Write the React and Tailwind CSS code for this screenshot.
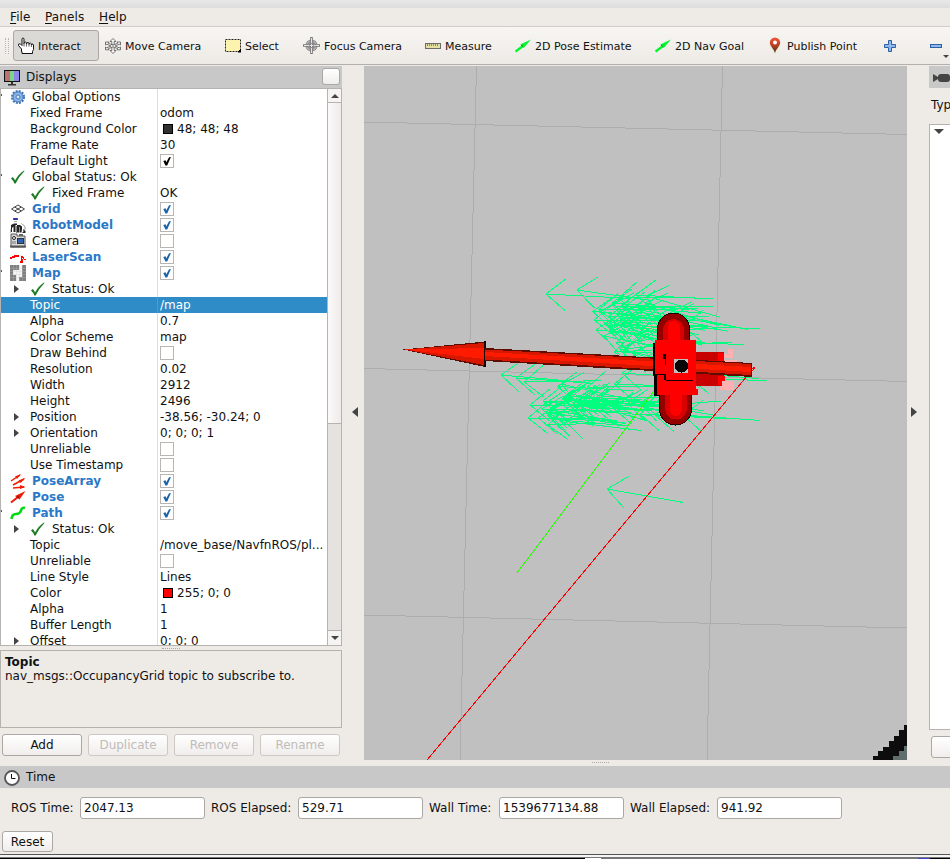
import React from 'react';

/* ---------- toolbar icons ---------- */

const HandIcon = () => (
  <svg width="18" height="18" viewBox="0 0 18 18" className="-ml-px -mr-px shrink-0">
    <path
      d="M4.5 14.5V12L1.5 8.500V7.200L3.300 6.800L5 8.5V2.2Q5 1 6 1T7 2.2V6.5L7.5 5.4Q8.6 4.6 9.4 5.6V7L10 5.8Q11.2 5.2 12 6.2V7.4L12.6 6.2Q13.8 5.8 14.4 6.8V8L15 7Q16.2 6.8 16.5 8V12.5L15.5 14.5V16.5H5V14.5Z"
      fill="#fff" stroke="#111" strokeWidth="1" />
    <path d="M7 6V9.500M9.4 6.5V9.500M12 7V9.500M14.4 8V10" stroke="#333" strokeWidth=".8" fill="none" />
  </svg>
);

const MoveIcon = () => (
  <svg width="18" height="18" viewBox="0 0 18 18" className="-ml-px -mr-px shrink-0">
    <g fill="#f7f7f7" stroke="#555" strokeWidth=".8">
      <path d="M9 1.500L12 4.500H10.200V8H7.800V4.500H6Z" />
      <path d="M9 16.500L12 13.500H10.200V9.500H7.800V13.500H6Z" />
      <path d="M1.500 5H5L4.200 6.200L9 8.200L13.800 6.200L13 5H16.500V8L15.200 7.200L11 9L15.200 10.800L16.500 10V12.800H13L13.800 11.700L9 9.800L4.200 11.700L5 12.800H1.500V10L2.800 10.800L7 9L2.800 7.200L1.500 8Z" />
    </g>
  </svg>
);

const SelectIcon = () => (
  <svg width="16" height="16" viewBox="0 0 16 16" className="shrink-0">
    <rect x=".5" y="1.5" width="15" height="12" fill="#fbf3ae" stroke="#222" strokeDasharray="2 1" />
    <path d="M16 11V14H13Z" fill="#000" stroke="#000" />
  </svg>
);

const FocusIcon = () => (
  <svg width="17" height="17" viewBox="0 0 17 17" className="shrink-0">
    <circle cx="8.5" cy="8.5" r="4.8" fill="#ececec" stroke="#777" strokeWidth="2.4" />
    <circle cx="8.5" cy="8.5" r="4.8" fill="none" stroke="#e0e0e0" strokeWidth=".9" />
    <path d="M8.5 0V17M0 8.5H17" stroke="#777" strokeWidth="2.6" />
    <path d="M8.5 1V16M1 8.5H16" stroke="#e4e4e4" strokeWidth="1" />
    <path d="M6.5 5V12M10.5 5V12M5 6.5H12M5 10.5H12" stroke="#888" strokeWidth=".8" />
  </svg>
);

const RulerIcon = () => (
  <svg width="16" height="16" viewBox="0 0 16 16" className="shrink-0">
    <rect x=".5" y="5.5" width="15" height="5" fill="#e6dfa4" stroke="#6b6b6b" />
    <path d="M2.5 6V8M4.5 6V8M6.5 6V8M8.5 6V8M10.5 6V8M12.5 6V8" stroke="#77745c" strokeWidth=".8" />
  </svg>
);

const ArrowIcon = () => (
  <svg width="16" height="16" viewBox="0 0 16 16" className="shrink-0">
    <path d="M.5 13.5L8 8" stroke="#00f52c" strokeWidth="2.400" />
    <path d="M16 1.500L5.300 6.500L8.700 10Z" fill="#00f52c" />
    <path d="M6 7L8 8.500" stroke="#0a9a20" />
  </svg>
);

const PinIcon = () => (
  <svg width="16" height="17" viewBox="0 0 16 17" className="shrink-0">
    <defs>
      <linearGradient id="pin" x1="0" y1="0" x2="0" y2="1">
        <stop offset="0" stopColor="#f0573a" />
        <stop offset=".4" stopColor="#cb4124" />
        <stop offset="1" stopColor="#3f3a12" />
      </linearGradient>
    </defs>
    <path d="M8 16.5C7.5 12.5 2.8 9.5 2.8 5.6A5.2 5.2 0 0 1 13.2 5.6C13.2 9.5 8.500 12.500 8 16.500Z" fill="url(#pin)" />
    <circle cx="8" cy="5.500" r="2" fill="#fff" />
  </svg>
);

const PlusIcon = () => (
  <svg width="14" height="14" viewBox="0 0 14 14" className="shrink-0">
    <path d="M5.500 1.500H8.500V5.500H12.500V8.500H8.500V12.500H5.500V8.500H1.500V5.500H5.500Z" fill="#8fb9ea" stroke="#2c5fa5" />
  </svg>
);

const MinusIcon = () => (
  <svg width="14" height="14" viewBox="0 0 14 14" className="shrink-0">
    <rect x="1.500" y="5.500" width="11" height="3" fill="#8fb9ea" stroke="#2c5fa5" />
  </svg>
);

const TOOLS = [
  { label: 'Interact', Icon: HandIcon, w: 'w-[87px]', active: true },
  { label: 'Move Camera', Icon: MoveIcon, w: 'w-[120px]' },
  { label: 'Select', Icon: SelectIcon, w: 'w-[78px]' },
  { label: 'Focus Camera', Icon: FocusIcon, w: 'w-[122px]' },
  { label: 'Measure', Icon: RulerIcon, w: 'w-[90px]' },
  { label: '2D Pose Estimate', Icon: ArrowIcon, w: 'w-[140px]' },
  { label: '2D Nav Goal', Icon: ArrowIcon, w: 'w-[112px]' },
  { label: 'Publish Point', Icon: PinIcon, w: 'w-[116px]' },
];

/* ---------- tree icons ---------- */

const Gear = () => (
  <svg width="16" height="16" viewBox="0 0 16 16">
    <circle cx="8" cy="8" r="6" fill="none" stroke="#3e74b8" strokeWidth="2" strokeDasharray="2 1.14" />
    <circle cx="8" cy="8" r="5" fill="#8db3e2" stroke="#4679ba" />
    <circle cx="8" cy="8" r="2" fill="#d6e5f7" stroke="#4679ba" />
  </svg>
);
const Check = () => (
  <svg width="16" height="16" viewBox="0 0 16 16">
    <path d="M1 9.500L2.800 8Q4.500 9.500 5 11.500Q8.500 5 14 1.500L14.500 2Q9.300 7 5.600 14.500H4.300Q3.500 11.500 1 9.500Z" fill="#1b7a22" />
  </svg>
);
const GridIcon = () => (
  <svg width="16" height="16" viewBox="0 0 16 16">
    <path d="M1.500 8L8 4L14.500 8L8 12ZM4.700 6L11.300 10M11.300 6L4.700 10" fill="none" stroke="#444" />
  </svg>
);
const Robot = () => (
  <svg width="16" height="16" viewBox="0 0 16 16">
    <rect x="3" y="1" width="5" height="2" rx=".8" fill="#2333b5" />
    <path d="M4 4H7V5H4Z" fill="#aaa" />
    <path d="M1 8L4 6.500H7V8H5.500V15H3.500V9.500L2 11V15H1ZM7 8H10V10H9.500V15.500H7ZM10 8L12 9.500V12L11.500 15.500H10ZM13 12L15.500 14V16H12L13.500 14.500Z" fill="#252525" />
    <path d="M11.500 6.500L15 9.500V13" stroke="#999" fill="none" />
    <path d="M0 12V16M6.500 9V16" stroke="#888" />
  </svg>
);
const CameraIcon = () => (
  <svg width="16" height="16" viewBox="0 0 16 16">
    <path d="M1 1H7V3H15V14H1Z" fill="#d9d9d9" stroke="#555" />
    <rect x="0" y="12.500" width="16" height="2" fill="#555" />
    <circle cx="4" cy="5" r="1.500" fill="#fff" stroke="#222" />
    <path d="M3 8V11M5 8V11" stroke="#777" />
    <rect x="7.500" y="5.500" width="6" height="5" fill="#2e62b0" stroke="#333" />
    <rect x="9" y="1" width="4" height="2" fill="#666" />
  </svg>
);
const Laser = () => (
  <svg width="16" height="16" viewBox="0 0 16 16" shapeRendering="crispEdges">
    <path d="M0 8H2V7H4V6H9V9H11V12H10V14H13V8H14V10H16V11H14V10H12V9H13V7H11V9H9V8H5V9H2V10H0Z" fill="#f00" />
  </svg>
);
const MapIcon = () => (
  <svg width="16" height="16" viewBox="0 0 16 16" shapeRendering="crispEdges">
    <rect width="16" height="16" fill="#f6f6f6" />
    <path d="M0 0H9V5H3V10H6V16H0ZM12 0H16V16H9V12H12Z" fill="#808080" />
    <path d="M3.500 0V16M6.500 0V16M9.500 0V16M12.500 0V16M0 3.500H16M0 6.500H16M0 9.500H16M0 12.500H16" stroke="#c4c4c4" strokeWidth=".5" opacity=".6" />
  </svg>
);
const PoseArrayIcon = () => (
  <svg width="16" height="16" viewBox="0 0 16 16">
    <path d="M1 8L10 2M3 12L14 6M3 15L14 14" stroke="#f01c05" strokeWidth="1.500" />
    <path d="M11 1L5 3.500L7 6ZM15.500 5L8.500 7.500L10.500 10ZM15.500 14L10 12V16Z" fill="#f01c05" />
  </svg>
);
const PoseIcon = () => (
  <svg width="16" height="16" viewBox="0 0 16 16">
    <path d="M1 13.500L8 8" stroke="#f01c05" strokeWidth="2" />
    <path d="M15.500 2L5 7L9.500 10.500Z" fill="#f01c05" />
    <circle cx="8" cy="8" r="1.200" fill="#a01000" />
  </svg>
);
const PathIcon = () => (
  <svg width="16" height="16" viewBox="0 0 16 16">
    <path d="M1.500 14Q2 9 6 9T11 5.500T15 3" fill="none" stroke="#00d914" strokeWidth="2.600" />
  </svg>
);

const ROWS = [
  { n: 'Global Options', Icon: Gear, edge: true },
  { n: 'Fixed Frame', v: 'odom' },
  { n: 'Background Color', v: '48; 48; 48', swatch: 'bg-[#303030]' },
  { n: 'Frame Rate', v: '30' },
  { n: 'Default Light', box: 'black' },
  { n: 'Global Status: Ok', Icon: Check, edge: true },
  { n: 'Fixed Frame', Icon: Check, sub: true, v: 'OK' },
  { n: 'Grid', Icon: GridIcon, bold: true, box: 'blue' },
  { n: 'RobotModel', Icon: Robot, bold: true, box: 'blue' },
  { n: 'Camera', Icon: CameraIcon, box: 'off' },
  { n: 'LaserScan', Icon: Laser, bold: true, box: 'blue' },
  { n: 'Map', Icon: MapIcon, bold: true, box: 'blue', edge: true },
  { n: 'Status: Ok', Icon: Check, sub: true, tri: true },
  { n: 'Topic', v: '/map', selected: true },
  { n: 'Alpha', v: '0.7' },
  { n: 'Color Scheme', v: 'map' },
  { n: 'Draw Behind', box: 'off' },
  { n: 'Resolution', v: '0.02' },
  { n: 'Width', v: '2912' },
  { n: 'Height', v: '2496' },
  { n: 'Position', v: '-38.56; -30.24; 0', tri: true },
  { n: 'Orientation', v: '0; 0; 0; 1', tri: true },
  { n: 'Unreliable', box: 'off' },
  { n: 'Use Timestamp', box: 'off' },
  { n: 'PoseArray', Icon: PoseArrayIcon, bold: true, box: 'blue' },
  { n: 'Pose', Icon: PoseIcon, bold: true, box: 'blue' },
  { n: 'Path', Icon: PathIcon, bold: true, box: 'blue', edge: true },
  { n: 'Status: Ok', Icon: Check, sub: true, tri: true },
  { n: 'Topic', v: '/move_base/NavfnROS/pl...' },
  { n: 'Unreliable', box: 'off' },
  { n: 'Line Style', v: 'Lines' },
  { n: 'Color', v: '255; 0; 0', swatch: 'bg-[#ff0000]' },
  { n: 'Alpha', v: '1' },
  { n: 'Buffer Length', v: '1' },
  { n: 'Offset', v: '0; 0; 0', tri: true },
];

function CheckBox({ kind }) {
  return (
    <span className="flex h-[14px] w-[14px] items-center justify-center border border-[#b8b5b2] bg-white">
      {kind !== 'off' && (
        <svg width="12" height="12" viewBox="0 0 12 12">
          <path d="M2.300 6L4.500 5.300L5.300 7.300L8.100 2.200L9.900 2L6.200 10.500H4.400Z" fill={kind === 'blue' ? '#1d64a8' : '#000'} />
        </svg>
      )}
    </span>
  );
}

function Row({ row }) {
  const { n, Icon, v, bold, sub, tri, edge, box, swatch, selected } = row;
  const pad = sub || !Icon ? 'w-[29px]' : 'w-[9px]';
  return (
    <div className={`flex h-4 shrink-0 ${selected ? 'bg-[#308cc6] text-white' : ''}`}>
      <div className={`flex w-[157px] shrink-0 items-center border-r ${selected ? 'border-[#4f9dd0]' : 'border-[#dcdcdc]'}`}>
        <span className={`flex h-4 shrink-0 items-center ${pad}`}>
          {edge && <span className="-mt-1 h-[2px] w-px bg-[#555]" />}
          {tri && <span className="ml-[13px] h-0 w-0 border-y-[4px] border-l-[5px] border-y-transparent border-l-[#444]" />}
        </span>
        {Icon && <span className="mr-[6px] w-4 shrink-0"><Icon /></span>}
        <span className={`whitespace-nowrap ${bold ? 'font-bold text-[#2a78c8]' : ''}`}>{n}</span>
      </div>
      <div className="flex items-center whitespace-nowrap pl-[2px]">
        {swatch && <span className={`ml-[3px] mr-1 h-[10px] w-[10px] border border-black ${swatch}`} />}
        {box ? <CheckBox kind={box} /> : v}
      </div>
    </div>
  );
}

function ScrollBar() {
  return (
    <div className="flex w-[14px] shrink-0 flex-col border-l border-[#b5b2af] bg-[#e6e2df]">
      <div className="flex h-[14px] items-center justify-center border-b border-[#b5b2af] bg-[#f6f4f2]">
        <span className="h-0 w-0 border-x-[4px] border-b-[4px] border-x-transparent border-b-[#444]" />
      </div>
      <div className="h-[321px] border-b border-[#b5b2af] bg-linear-to-r from-[#fbfafa] to-[#eeebe8]" />
      <div className="flex-1" />
      <div className="flex h-[15px] items-center justify-center border-t border-[#b5b2af] bg-[#f6f4f2]">
        <span className="-mt-px h-0 w-0 border-x-[4px] border-t-[4px] border-x-transparent border-t-[#444]" />
      </div>
    </div>
  );
}

const BTN = 'flex items-center justify-center rounded-[3px] border border-[#aaa7a4] bg-linear-to-b from-[#ffffff] to-[#f0eeec]';

function DisplaysPanel() {
  return (
    <div className="flex w-[342px] shrink-0 flex-col">
      <div className="flex h-[22px] items-center bg-[#c8c8c8] pl-1">
        <svg width="16" height="16" viewBox="0 0 16 16" className="mt-px">
          <rect x=".5" y=".5" width="15" height="11" fill="#222" stroke="#111" />
          <rect x="1" y="1" width="5" height="10" fill="#bb7272" />
          <rect x="6" y="1" width="4" height="10" fill="#7ed487" />
          <rect x="10" y="1" width="5" height="10" fill="#8a87e8" />
          <path d="M7 12H9V14H12V15.500H4V14H7Z" fill="#333" />
        </svg>
        <span className="ml-[6px] flex-1">Displays</span>
        <span className={`mr-[2px] h-[17px] w-[18px] -mt-px ${BTN} border-[#8f8c8a]`} />
      </div>
      <div className="flex h-[558px] border border-[#b5b2af] bg-white">
        <div className="flex w-[326px] flex-col overflow-hidden">
          {ROWS.map((r, i) => <Row key={i} row={r} />)}
        </div>
        <ScrollBar />
      </div>
      <div className="flex h-1 items-center justify-center">
        <span className="h-px w-[18px] border-t border-dotted border-[#aaa]" />
      </div>
      <div className="h-[78px] border border-[#b5b2af] pl-1 pt-1 leading-[14px]">
        <div className="font-bold">Topic</div>
        <div className="whitespace-nowrap">nav_msgs::OccupancyGrid topic to subscribe to.</div>
      </div>
      <div className="mt-[6px] flex gap-[6px] pl-[2px]">
        {['Add', 'Duplicate', 'Remove', 'Rename'].map((b, i) => (
          <span key={b} className={`h-[22px] w-[80px] ${BTN} ${i ? 'border-[#cbc8c5] text-[#bfbcba]' : ''}`}>{b}</span>
        ))}
      </div>
    </div>
  );
}

/* ---------- 3D view ---------- */

/* Particle poses as [tip x, tip y, direction of the tail in degrees]. */
const POSES = [
  [546, 294, 3], [577, 290, 8], [594, 320, 0], [596, 330, 5], [636, 295, 3], [646, 296, 16],
  [672, 316, 10], [683, 326, 2], [655, 345, -2], [645, 303, 17], [670, 313, 12], [640, 332, -3],
  [501, 375, 5], [516, 378, 4], [524, 382, -1], [528, 418, 0], [548, 425, -2], [614, 384, 2],
  [622, 373, 4], [683, 415, 4], [690, 378, 2], [682, 372, 5], [530, 405, 1], [543, 401, 2],
  [575, 410, 4], [640, 414, 3], [655, 415, 3], [622, 352, 2], [614, 352, -3], [607, 489, 10],
  [565, 396, 3], [580, 400, 2], [577, 403, 1], [590, 404, 2], [585, 398, 5], [572, 405, 0],
  [600, 312, 7], [612, 303, 5], [620, 318, 2], [626, 322, 3], [604, 336, 12], [616, 343, -6],
];

function scatter(count, cx, cy, rx, ry, seed) {
  let s = seed;
  const next = () => {
    s = (s * 16807) % 2147483647;
    return s / 2147483647;
  };
  const spread = () => next() + next() - 1;
  for (let i = 0; i < 5; i += 1) next();
  return Array.from({ length: count }, () => [cx + spread() * rx, cy + spread() * ry, 5 + spread() * 14]);
}

const ALL_POSES = [
  ...POSES,
  ...scatter(20, 622, 313, 34, 26, 71),
  ...scatter(6, 645, 346, 34, 14, 19),
  ...scatter(22, 567, 402, 42, 26, 933),
  ...scatter(6, 622, 407, 34, 12, 405),
];

function posePath([x, y, deg]) {
  const at = (d, r) => {
    const a = (d * Math.PI) / 180;
    return `${(x + Math.cos(a) * r).toFixed(1)} ${(y + Math.sin(a) * r).toFixed(1)}`;
  };
  return `M${at(deg, 77)}L${x} ${y}M${at(deg - 40, 25)}L${x} ${y}L${at(deg + 38, 25)}`;
}

function View3D() {
  return (
    <svg width="543" height="694" viewBox="364 66 543 694" shapeRendering="crispEdges" className="shrink-0 bg-[#c0c0c0]">
      <path d="M476.500 66L460 760M722.500 66L707 760M364 122L907 134.500M364 368.500L907 381.500M364 615L907 628" stroke="#adadad" fill="none" />
      <path d="M644 325H658V332H644ZM722 360H737V366H722ZM720 381H734V390H720ZM656 414H662V418H656Z" fill="#ffb0b0" />
      <path d={ALL_POSES.map(posePath).join('')} stroke="#00ff7f" fill="none" />
      <path d="M654 391L517 573" stroke="#28ff00" />
      <path d="M755 368L747 376L427 760" stroke="#f00" fill="none" />
      {/* base pieces behind the pose arrow */}
      <path d="M695 352H724V386H695Z" fill="#c80000" />
      <path d="M718 353H724V362H718ZM718 376H725V385H718Z" fill="#f00" />
      <path d="M728 349H733V358H728ZM724 354H728V358H724ZM722 381H734V390H722Z" fill="#ffb0b0" />
      {/* pose arrow */}
      <path d="M403 349.500L485 341.500V348L752 363V377L485 361V367Z" fill="#5e0b00" />
      <path d="M405 349.500L484 343V365Z" fill="#d81700" />
      <path d="M405 349.500L484 348V359Z" fill="#ff1a00" />
      <path d="M485 349.500L751 364V375L485 359.500Z" fill="#d81700" />
      <path d="M485 352L751 367V372L485 356Z" fill="#ff1a00" />
      <path d="M484 341H486V348H484.500V361H486V367H484Z" fill="#160000" />
      <path d="M751.500 364V377" stroke="#800" />
      <path d="M752 369L755 367" stroke="#f00" />
      {/* wheels */}
      <path d="M657.500 360V329A16 16 0 0 1 689.500 329V360Z" fill="#940000" stroke="#180000" />
      <path d="M663 350V331A10.500 12 0 0 1 684 331V350Z" fill="#d80000" />
      <path d="M668 345V328A6 7 0 0 1 680 328V345Z" fill="#f00" />
      <path d="M659.500 390V409A16 16 0 0 0 691.500 409V390Z" fill="#940000" stroke="#180000" />
      <path d="M665 390V408A10.500 11 0 0 0 687 408V390Z" fill="#d80000" />
      <path d="M670 390V409A6 7 0 0 0 682 409V390Z" fill="#f00" />
      {/* body */}
      <path d="M653 343H656V341H660V396H654V376H653Z" fill="#080000" />
      <path d="M655 341V340H696V389H698V395H657V375H655Z" fill="#f00" />
      <path d="M663 354H666V365H665V359H663ZM655 374H666V381H693V380H664V375H655Z" fill="#140000" />
      <path d="M674 359H688V373H674Z" fill="#c0c0c0" />
      <circle cx="681.500" cy="366" r="6.500" fill="#080808" />
      {/* occupied map cells in the corner */}
      <path d="M873 760V756H878V751H883V747H889V741H894V736H899V730H904V725H907V760Z" fill="#0d0d0d" />
      <path d="M893 760V756H899V751H904V746H907V760Z" fill="#5f6e6c" />
    </svg>
  );
}

const TIMES = [
  ['ROS Time:', '2047.13', 'w-[69px]'],
  ['ROS Elapsed:', '529.71', 'w-[87px]'],
  ['Wall Time:', '1539677134.88', 'w-[70px]'],
  ['Wall Elapsed:', '941.92', 'w-[87px]'],
];

export default function App() {
  return (
    <div className="flex h-[859px] w-[950px] flex-col overflow-hidden bg-[#eeebe7] font-['DejaVu_Sans',sans-serif] text-[12px] leading-4 text-[#111]">
      <div className="h-2 shrink-0 bg-linear-to-b from-[#e8e8e8] to-[#dcdcdc]" />
      <div className="flex h-[19px] shrink-0 items-center border-b border-[#d0cdc9] pl-[10px]">
        {[['File', 'w-[35px]'], ['Panels', 'w-[54px]'], ['Help', 'w-[40px]']].map(([m, w]) => (
          <span key={m} className={`whitespace-nowrap tracking-[0.1px] ${w}`}>
            <span className="underline underline-offset-2">{m[0]}</span>{m.slice(1)}
          </span>
        ))}
      </div>
      <div className="flex h-[38px] shrink-0 items-center border-b border-[#b2afac] bg-linear-to-b from-[#f8f6f2] to-[#edeae6] text-[11px]">
        <div className="ml-[5px] mr-[4px] flex h-4 w-1 justify-between">
          <span className="h-4 border-l border-dotted border-[#b8b5b2]" />
          <span className="h-4 border-l border-dotted border-[#b8b5b2]" />
        </div>
        {TOOLS.map(({ label, Icon, w, active }) => (
          <div key={label} className={`shrink-0 ${w}`}>
            <div className={`flex h-[31px] items-center gap-1 whitespace-nowrap ${active ? 'w-[86px] rounded-[3px] border border-[#aaa7a4] bg-[#dbd9d6] pl-1' : 'pl-[5px]'}`}>
              <Icon />
              <span className="mt-[2px]">{label}</span>
            </div>
          </div>
        ))}
        <div className="ml-[5px]"><PlusIcon /></div>
        <div className="ml-8"><MinusIcon /></div>
        <span className="mt-[21px] h-0 w-0 shrink-0 border-x-[3px] border-t-[3px] border-x-transparent border-t-[#444]" />
      </div>

      <div className="mt-px flex h-[694px] shrink-0">
        <DisplaysPanel />
        <div className="flex w-[22px] shrink-0 items-center pl-[10px]">
          <span className="-mt-[2px] h-0 w-0 border-y-[5px] border-r-[6px] border-y-transparent border-r-[#444]" />
        </div>
        <View3D />
        <div className="flex w-[22px] shrink-0 items-center pl-[4px]">
          <span className="-mt-[2px] h-0 w-0 border-y-[5px] border-l-[6px] border-y-transparent border-l-[#444]" />
        </div>
        <div className="flex w-[21px] shrink-0 flex-col overflow-hidden">
          <div className="flex h-[22px] shrink-0 items-center bg-[#c8c8c8] pl-1">
            <svg width="17" height="12" viewBox="0 0 17 12" className="mt-[2px] shrink-0">
              <path d="M0 2L5 5V7L0 10ZM4 5H6V7H4Z" fill="#444" />
              <rect x="5" y="2" width="12" height="8" rx="3" fill="#444" />
            </svg>
          </div>
          <div className="mt-[9px] h-4 shrink-0 whitespace-nowrap pl-[2px]">Type:</div>
          <div className="mt-[11px] h-[606px] w-[30px] shrink-0 border border-[#b5b2af] bg-white">
            <div className="ml-[4px] mt-1 h-0 w-0 border-x-[5px] border-t-[5px] border-x-transparent border-t-[#444]" />
          </div>
          <div className={`ml-[2px] mt-[6px] h-[22px] w-10 shrink-0 ${BTN}`} />
        </div>
      </div>

      <div className="flex h-[6px] shrink-0 items-center pl-[592px]">
        <span className="-mt-px h-px w-[17px] border-t border-dotted border-[#aaa]" />
      </div>
      <div className="flex h-[22px] shrink-0 items-center bg-[#c8c8c8] pl-1">
        <svg width="16" height="16" viewBox="0 0 16 16" className="mt-[2px]">
          <circle cx="8" cy="8" r="7" fill="#fff" stroke="#555" strokeWidth="1.800" />
          <path d="M7.500 4V8.500H11.500" fill="none" stroke="#111" />
        </svg>
        <span className="ml-[6px]">Time</span>
      </div>
      <div className="mt-[9px] flex h-[22px] shrink-0 gap-[6px] pl-[11px]">
        {TIMES.map(([label, value, w]) => (
          <div key={label} className="flex items-center">
            <span className={`shrink-0 whitespace-nowrap ${w}`}>{label}</span>
            <span className="flex h-[22px] w-[125px] items-center rounded-[3px] border border-[#aaa7a4] bg-white pl-[3px]">{value}</span>
          </div>
        ))}
      </div>
      <div className="mt-3 pl-[2px]">
        <span className={`h-[21px] w-[51px] ${BTN}`}>Reset</span>
      </div>
      <div className="mt-[2px] h-[3px] shrink-0 border-t border-[#555] bg-[#f5f5f5]" />
      <div className="h-px shrink-0 bg-[#777]" />
      <div className="flex h-px shrink-0 bg-black">
        <span className="ml-[585px] h-px w-4 bg-white" />
        <span className="h-px w-[317px] bg-[#777]" />
        <span className="h-px w-3 bg-[#44c]" />
      </div>
    </div>
  );
}
